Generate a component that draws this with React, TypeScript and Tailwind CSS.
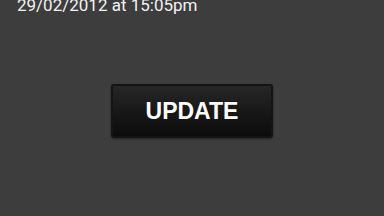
import React from 'react';

export default function App() {
  return (
    <div className="w-[384px] h-[216px] overflow-hidden bg-[#3d3d3d] font-['Roboto',sans-serif] text-[#f2f2f2]">
      <p className="pl-[17px] -mt-[5px] text-[17px] leading-[20px]">29/02/2012 at 15:05pm</p>
      <div className="flex justify-center pt-[69px]">
        <button className="w-[162px] h-[54px] rounded-[3px] border-2 border-[#141414] bg-gradient-to-b from-[#262626] to-[#0c0c0c] shadow-[0_1px_2px_rgba(0,0,0,0.4)] text-white font-bold text-[23px] font-['Liberation_Sans',Arial,sans-serif]">
          UPDATE
        </button>
      </div>
    </div>
  );
}
